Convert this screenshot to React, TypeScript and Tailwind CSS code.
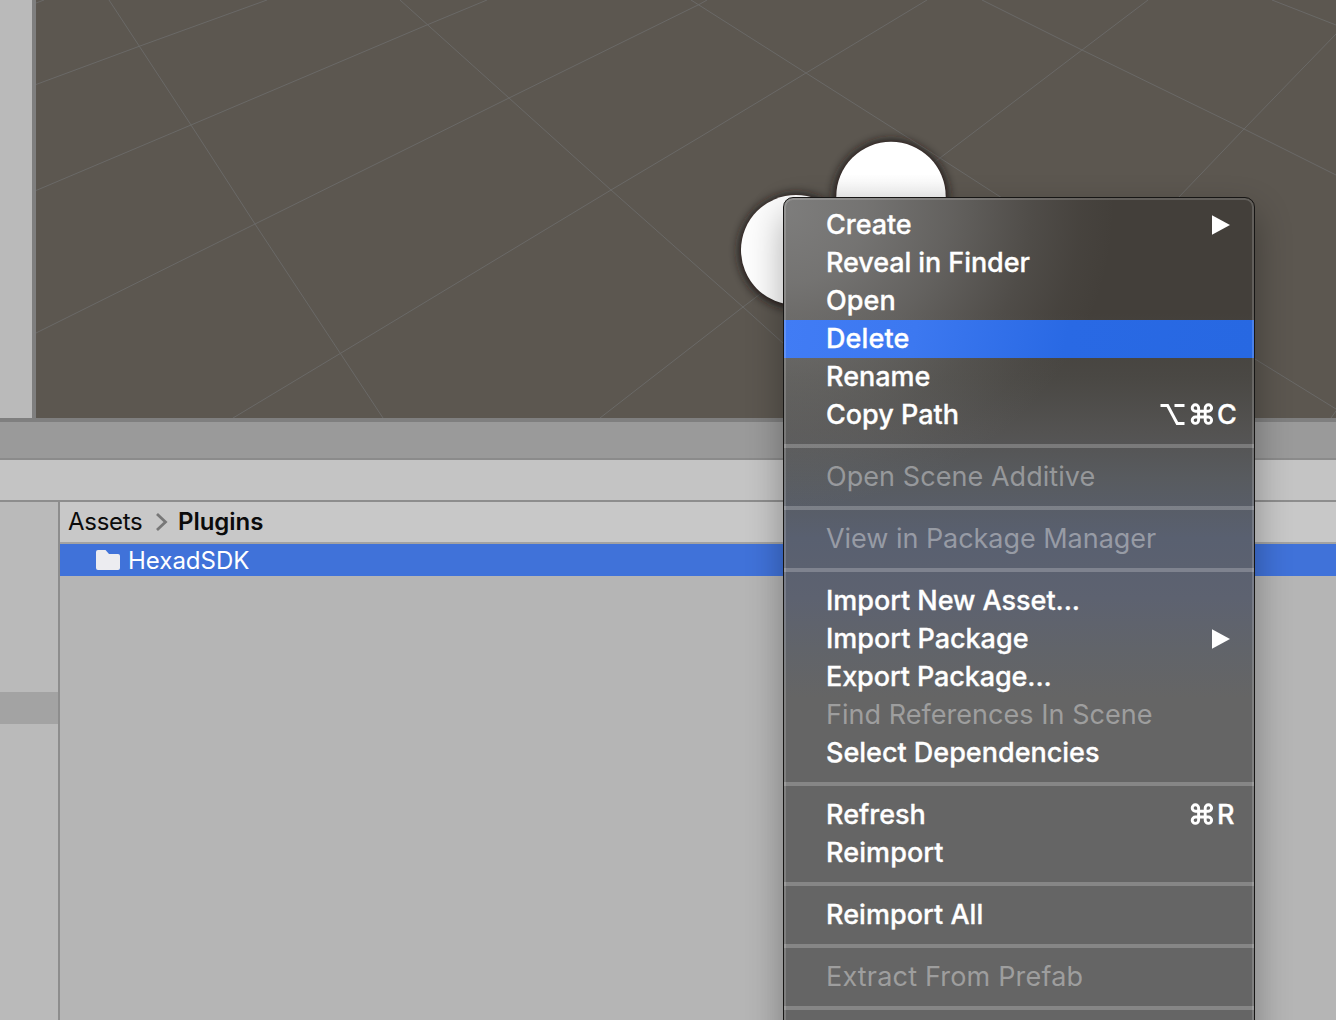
type Item = {
  label: string;
  track: string;
  disabled?: boolean;
  selected?: boolean;
  submenu?: boolean;
  shortcut?: string;
};

const groups: Item[][] = [
  [
    { label: 'Create', track: 'tracking-[-0.05px]', submenu: true },
    { label: 'Reveal in Finder', track: 'tracking-[-0.08px]' },
    { label: 'Open', track: 'tracking-[0.1px]' },
    { label: 'Delete', track: 'tracking-[0.1px]', selected: true },
    { label: 'Rename', track: 'tracking-[0px]' },
    { label: 'Copy Path', track: 'tracking-[0px]', shortcut: '⌥⌘C' },
  ],
  [{ label: 'Open Scene Additive', track: 'tracking-[0.06px]', disabled: true }],
  [{ label: 'View in Package Manager', track: 'tracking-[-0.04px]', disabled: true }],
  [
    { label: 'Import New Asset...', track: 'tracking-[-0.04px]' },
    { label: 'Import Package', track: 'tracking-[-0.02px]', submenu: true },
    { label: 'Export Package...', track: 'tracking-[-0.1px]' },
    { label: 'Find References In Scene', track: 'tracking-[0.04px]', disabled: true },
    { label: 'Select Dependencies', track: 'tracking-[-0.01px]' },
  ],
  [
    { label: 'Refresh', track: 'tracking-[0px]', shortcut: '⌘R' },
    { label: 'Reimport', track: 'tracking-[0.1px]' },
  ],
  [{ label: 'Reimport All', track: 'tracking-[0.04px]' }],
  [{ label: 'Extract From Prefab', track: 'tracking-[0.18px]', disabled: true }],
];

const gridLines = [
  '109,0 191,125 255,224 383,418',
  '400,0 509,98 611,190 700,269 743,307 784,344',
  '691,0 806,73 940,158 1002,198 1255,359 1336,409',
  '982,0 1082,50 1244,129 1336,175',
  '1272,0 1336,25',
  '36,3 44,0',
  '36,84.5 140,46 267,0',
  '36,190.5 191,125 428,24.5 487,0',
  '36,333 255,224 509,98 700,4 707,0',
  '233,418 341,353 611,190 700,137 806,73 927,0',
  '600,418 636,390 743,307 940,158 1082,50 1148,0',
  '1178,198 1244,129 1336,34',
  '1331,418 1336,411',
];

function OptionIcon() {
  return (
    <svg className="h-[24px] w-[26px]" viewBox="0 0 26 24" fill="none" stroke="white" strokeWidth="3">
      <path d="M0.500 2.500H7.600L17.200 20.500H24.500M14.500 2.500H24.500" />
    </svg>
  );
}

function CommandIcon() {
  return (
    <svg className="h-[24px] w-[24px]" viewBox="0 0 24 24" fill="none" stroke="white" strokeWidth="2.9">
      <path d="M8.600 5V17.200A3.200 3.200 0 1 1 5.400 14H18.400A3.200 3.200 0 1 1 15.200 17.200V5A3.200 3.200 0 1 1 18.400 8.200H5.400A3.200 3.200 0 1 1 8.600 5Z" />
    </svg>
  );
}

function Shortcut({ keys }: { keys: string }) {
  return (
    <span className="mr-[17px] flex items-center" aria-label={keys}>
      {keys.includes('⌥') && (
        <span className="mr-[4px]">
          <OptionIcon />
        </span>
      )}
      <CommandIcon />
      <span className="ml-[3px] w-[20px]">{keys.slice(-1)}</span>
    </span>
  );
}

function MenuRow({ item }: { item: Item }) {
  return (
    <div
      className={`flex h-[38px] items-center justify-between pl-[42px] text-[27px] leading-[38px] whitespace-nowrap ${
        item.selected ? 'bg-[linear-gradient(100deg,#417cf5_0%,#3c78f0_28%,#2969e4_60%,#2768e2_100%)]' : ''
      } ${item.disabled ? 'font-normal text-white/38' : 'font-medium text-white [-webkit-text-stroke:0.3px_white]'}`}
    >
      <span className={item.track}>{item.label}</span>
      {item.submenu && (
        <svg className="mr-[24px] h-[20px] w-[18px]" viewBox="0 0 18 20" fill="white">
          <path d="M0 0.3L18 10L0 19.7Z" />
        </svg>
      )}
      {item.shortcut && <Shortcut keys={item.shortcut} />}
    </div>
  );
}

function Scene() {
  return (
    <div className="relative flex-1 overflow-hidden bg-[#5c5750]">
      <svg className="absolute top-0 left-0 h-[418px] w-[1300px]" viewBox="36 0 1300 418">
        <defs>
          <filter id="shade" x="-30%" y="-30%" width="160%" height="160%">
            <feGaussianBlur stdDeviation="5" />
          </filter>
          <linearGradient id="ball" x1="0" y1="0" x2="0" y2="1">
            <stop offset="0.3" stopColor="#ffffff" />
            <stop offset="0.52" stopColor="#f0f0f0" />
          </linearGradient>
        </defs>
        <g fill="none" stroke="#6a6967" strokeWidth="1">
          {gridLines.map((points) => (
            <polyline key={points} points={points} />
          ))}
        </g>
        <g fill="#1c1612" opacity="0.9" filter="url(#shade)">
          <circle cx="891" cy="197" r="57.500" />
          <circle cx="796" cy="251" r="57.500" />
        </g>
        <circle cx="891" cy="196.500" r="54.700" fill="url(#ball)" />
        <circle cx="796" cy="250" r="55" fill="#fdfdfd" />
      </svg>
    </div>
  );
}

function Project() {
  return (
    <div className="flex flex-1">
      <div className="w-[60px] border-r-2 border-[#8d8d8d] bg-[#bababa] pt-[190px]">
        <div className="h-[32px] bg-[#a3a3a3]" />
      </div>
      <div className="flex-1 bg-[#b5b5b5]">
        <div className="flex h-[42px] items-center border-b-2 border-[#a2a2a2] bg-[#c8c8c8] pl-[8px] text-[24px] text-[#0b0b0b]">
          <span className="w-[87px] tracking-[-0.3px]">Assets</span>
          <svg className="h-[20px] w-[14px]" viewBox="0 0 14 20" fill="none" stroke="#777" strokeWidth="2.8">
            <path d="M2 2L10.500 10L2 18" />
          </svg>
          <span className="ml-[9px] font-semibold tracking-[-0.05px]">Plugins</span>
        </div>
        <div className="flex h-[32px] items-center bg-[#4072d9] pl-[36px] text-[24px] text-white">
          <svg className="h-[20px] w-[24px]" viewBox="0 0 24 20" fill="#ececf0">
            <path d="M2 0H9.500L13 4H22Q24 4 24 6V18Q24 20 22 20H2Q0 20 0 18V2Q0 0 2 0Z" />
          </svg>
          <span className="ml-[8px] pt-[2px] tracking-[0px]">HexadSDK</span>
        </div>
      </div>
    </div>
  );
}

function ContextMenu() {
  return (
    <div className="absolute top-[197px] left-[783px] h-[860px] w-[472px] overflow-hidden rounded-[10px] border border-[#171615] bg-[radial-gradient(ellipse_330px_300px_at_0px_10px,rgba(168,170,172,0.58)_0%,rgba(165,167,169,0.5)_25%,rgba(160,162,164,0.35)_50%,rgba(155,157,159,0.14)_75%,rgba(155,157,159,0.04)_90%,transparent_100%),linear-gradient(180deg,#433f3a_0px,#433f3a_115px,#4a4844_180px,#545352_235px,#585b5f_280px,#596070_340px,#5d6270_400px,#61646a_450px,#656565_500px,#656565_100%)]">
      <div className="pt-[8px]">
        {groups.map((group, index) => (
          <div key={index}>
            {group.map((item) => (
              <MenuRow key={item.label} item={item} />
            ))}
            <div className="py-[10px]">
              <div className="h-[4px] bg-white/22" />
            </div>
          </div>
        ))}
      </div>
      <div className="absolute inset-0 rounded-[9px] border-2 border-white/17" />
    </div>
  );
}

export default function App() {
  return (
    <div className="relative flex h-[1020px] w-[1336px] flex-col overflow-hidden bg-[#b5b5b5] font-['Inter',sans-serif]">
      <div className="flex h-[418px]">
        <div className="w-[36px] border-r-4 border-[#7f7f7f] bg-[#bababa]" />
        <Scene />
      </div>
      <div className="h-[42px] border-t-4 border-b-2 border-t-[#7f7f7f] border-b-[#8b8b8b] bg-[#9a9a9a]" />
      <div className="h-[42px] border-b-2 border-[#8d8d8d] bg-[#c4c4c4]" />
      <Project />
      <div className="absolute top-[197px] left-[783px] h-[1000px] w-[472px] rounded-[10px] shadow-[0_16px_36px_rgba(0,0,0,0.32)]" />
      <ContextMenu />
    </div>
  );
}
